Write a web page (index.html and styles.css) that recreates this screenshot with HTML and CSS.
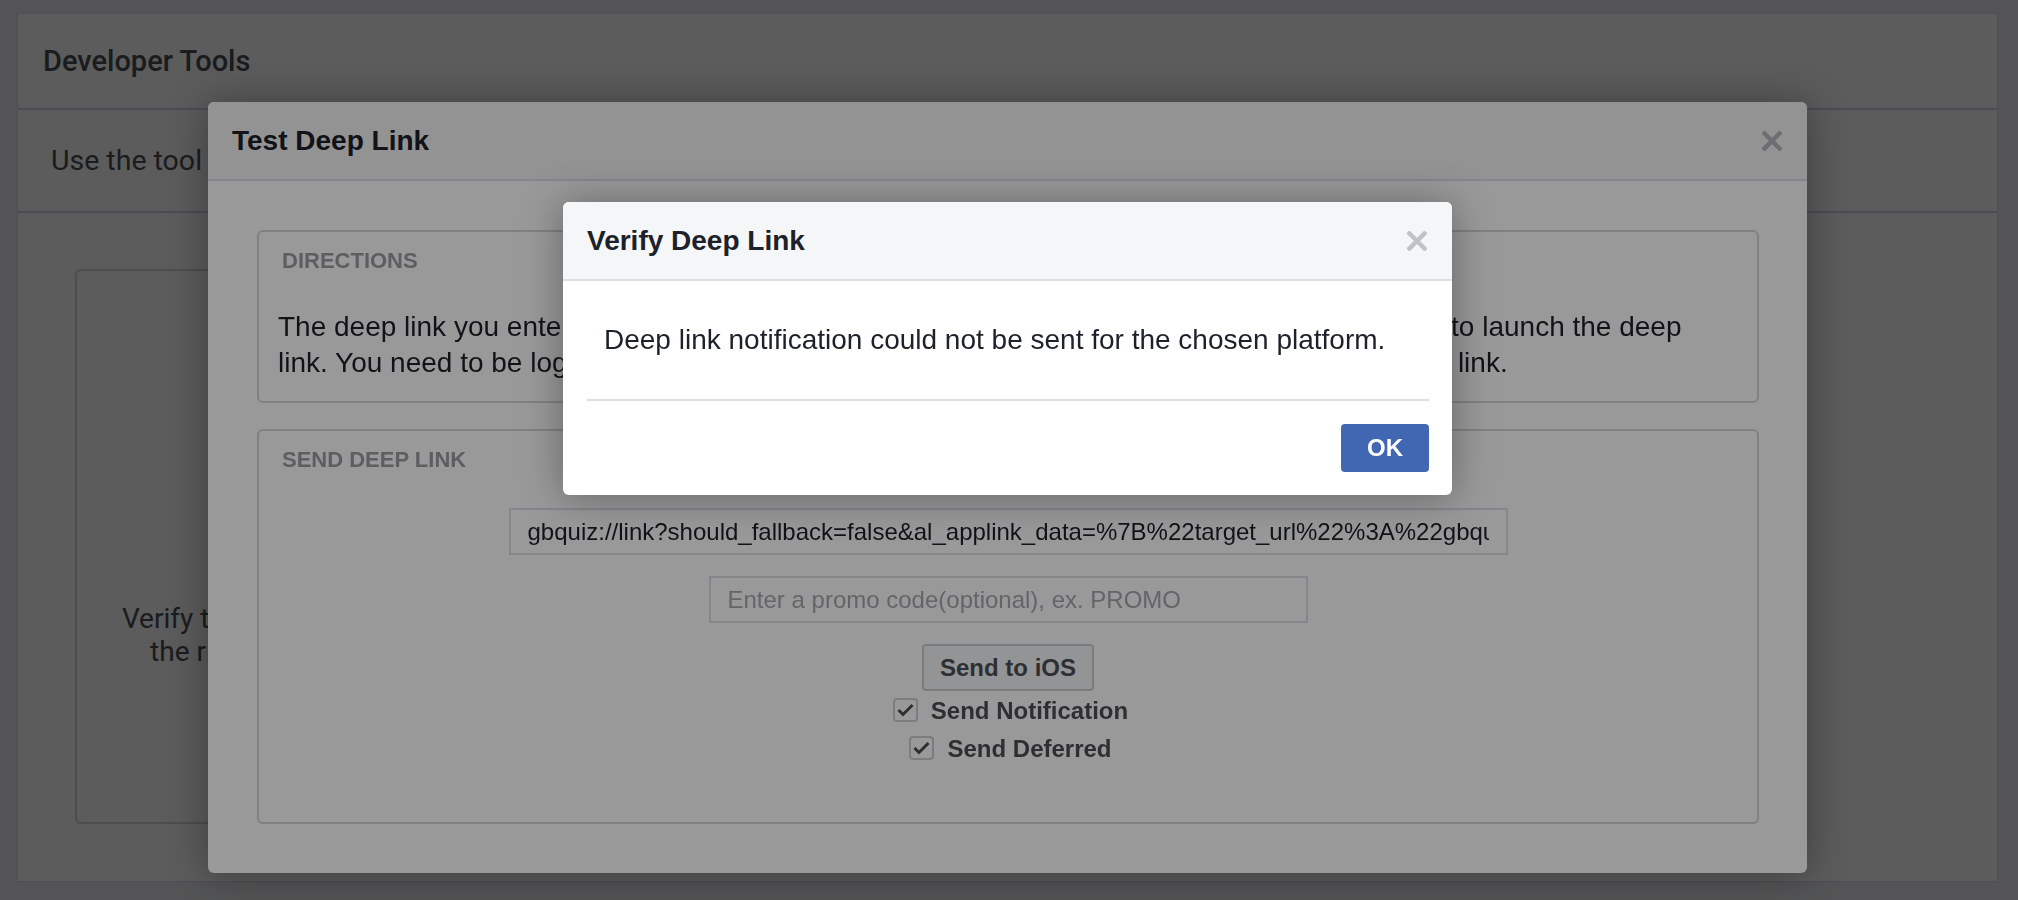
FILE: index.html
```html
<!DOCTYPE html>
<html lang="en">
<head>
<meta charset="utf-8">
<title>Developer Tools</title>
<link rel="stylesheet" href="styles.css">
</head>
<body>
<div class="page">
  <div class="panel">
    <div class="panel-head">Developer Tools</div>
    <div class="panel-intro">Use the tool below to test how your app handles deep links and notifications.</div>
    <div class="panel-body">
      <div class="tool-card">
        <p class="tool-text">Verify that a deep link opens<br>the right content in app.</p>
      </div>
    </div>
  </div>
</div>

<div class="overlay"></div>

<div class="modal test-modal">
  <div class="modal-head">
    <span class="modal-title">Test Deep Link</span>
    <svg class="close close-dim" width="20" height="20" viewBox="0 0 20 20"><path d="M2.5 2.5 L17.5 17.5 M17.5 2.5 L2.5 17.5" /></svg>
  </div>
  <div class="test-body">
    <div class="box directions">
      <div class="box-title">DIRECTIONS</div>
      <p class="dir-text">The deep link you entered will be sent to your mobile device. Tap the notification on the device to launch the deep<br>link. You need to be logged into Facebook on your device with the same account to receive the link.</p>
    </div>
    <div class="box send">
      <div class="box-title">SEND DEEP LINK</div>
      <div class="send-form">
        <input class="field url-field" type="text" value="gbquiz://link?should_fallback=false&amp;al_applink_data=%7B%22target_url%22%3A%22gbquiz%3A%2F%2Flink%22%7D">
        <input class="field promo-field" type="text" placeholder="Enter a promo code(optional), ex. PROMO">
        <button class="btn-send" type="button">Send to iOS</button>
        <label class="check">
          <span class="check-box"><svg width="25" height="24" viewBox="0 0 25 24"><path d="M5.5 12 L10 16.5 L19.5 7" /></svg></span>
          <span class="check-label">Send Notification</span>
        </label>
        <label class="check">
          <span class="check-box"><svg width="25" height="24" viewBox="0 0 25 24"><path d="M5.5 12 L10 16.5 L19.5 7" /></svg></span>
          <span class="check-label">Send Deferred</span>
        </label>
      </div>
    </div>
  </div>
</div>

<div class="overlay"></div>

<div class="modal verify-modal">
  <div class="modal-head verify-head">
    <span class="modal-title">Verify Deep Link</span>
    <svg class="close close-light" width="20" height="20" viewBox="0 0 20 20"><path d="M2.5 2.5 L17.5 17.5 M17.5 2.5 L2.5 17.5" /></svg>
  </div>
  <div class="verify-msg">Deep link notification could not be sent for the chosen platform.</div>
  <div class="verify-foot">
    <button class="btn-ok" type="button">OK</button>
  </div>
</div>
</body>
</html>
```
FILE: styles.css
```css
* { box-sizing: border-box; }

html, body {
  margin: 0;
  padding: 0;
  width: 2018px;
  height: 900px;
  overflow: hidden;
}

body {
  background: #e9ebee;
  font-family: "Liberation Sans", Arial, sans-serif;
  color: #1d2129;
}

/* ---------- background page ---------- */
.page {
  padding: 13px 20px 18px 17px;
  height: 900px;
}

.panel {
  height: 869px;
  background: #ffffff;
  border: 1px solid #dddfe2;
  display: flex;
  flex-direction: column;
  font-family: Roboto, "Liberation Sans", sans-serif;
}

.panel-head {
  height: 96px;
  border-bottom: 2px solid #d3d6db;
  display: flex;
  align-items: center;
  padding-left: 25px;
  font-size: 29px;
  font-weight: 500;
  color: #4b4f56;
}

.panel-intro {
  height: 103px;
  border-bottom: 2px solid #d3d6db;
  display: flex;
  align-items: center;
  padding-left: 33px;
  font-size: 28.5px;
  color: #4b4f56;
  white-space: nowrap;
  overflow: hidden;
}

.panel-body {
  flex: 1;
  padding: 56px 57px 57px 57px;
  display: flex;
}

.tool-card {
  width: 445px;
  border: 2px solid #d3d6db;
  border-radius: 6px;
  padding-top: 331px;
}

.tool-text {
  margin: 0;
  text-align: center;
  font-size: 28px;
  line-height: 33px;
  color: #4b4f56;
  white-space: nowrap;
}

/* ---------- overlays ---------- */
.overlay {
  position: fixed;
  inset: 0;
  background: rgba(0, 0, 0, 0.4);
}

/* ---------- modals ---------- */
.modal {
  position: absolute;
  background: #ffffff;
  border-radius: 6px;
  overflow: hidden;
  box-shadow: 0 2px 40px rgba(0, 0, 0, 0.35);
}

.test-modal {
  left: 208px;
  top: 102px;
  width: 1599px;
  height: 771px;
}

.verify-modal {
  left: 563px;
  top: 202px;
  width: 889px;
}

.modal-head {
  height: 79px;
  background: #f5f6f7;
  border-bottom: 2px solid #dddfe2;
  display: flex;
  align-items: center;
  justify-content: space-between;
  padding: 0 25px 0 24px;
}

.modal-title {
  font-size: 28px;
  font-weight: bold;
  color: #1d2129;
}

.close path {
  fill: none;
  stroke-width: 4.5;
  stroke-linecap: square;
}

.close-dim path { stroke: #b4b8be; }
.close-light path { stroke: #bec2c9; }

/* ---------- test modal body ---------- */
.test-body {
  padding: 49px 48px 49px 49px;
  display: flex;
  flex-direction: column;
  gap: 26px;
}

.box {
  border: 2px solid #d3d6db;
  border-radius: 6px;
  padding: 16px 19px 19px 19px;
}

.box-title {
  font-size: 22px;
  line-height: 26px;
  font-weight: bold;
  color: #9a9da4;
  padding-left: 4px;
}

.directions { height: 173px; }

.dir-text {
  margin: 35px 0 0 0;
  font-size: 28px;
  line-height: 36px;
  color: #1d2129;
  white-space: nowrap;
}

.send {
  height: 395px;
}

.send-form {
  margin-top: 35px;
  display: flex;
  flex-direction: column;
  align-items: center;
}

.field {
  height: 47px;
  border: 2px solid #dddfe2;
  border-radius: 0;
  background: #ffffff;
  padding: 0 17px;
  font-family: "Liberation Sans", Arial, sans-serif;
  font-size: 24px;
  color: #1d2129;
  outline: none;
}

.field::placeholder { color: #a5a8ae; }

.url-field { width: 999px; }

.promo-field {
  width: 599px;
  margin-top: 21px;
}

.btn-send {
  margin-top: 21px;
  height: 47px;
  padding: 0 16px;
  border: 2px solid #ccd0d5;
  border-radius: 4px;
  background: #f6f7f9;
  font-family: "Liberation Sans", Arial, sans-serif;
  font-size: 24px;
  font-weight: bold;
  color: #4b4f56;
}

.check {
  height: 38px;
  display: flex;
  align-items: center;
  gap: 13px;
  padding-left: 5px;
}

.check-box {
  width: 25px;
  height: 24px;
  border: 2px solid #ccd0d5;
  border-radius: 4px;
  background: #ffffff;
  display: flex;
  align-items: center;
  justify-content: center;
}

.check-box svg {
  display: block;
  flex: none;
}

.check-box path {
  fill: none;
  stroke: #4b4f56;
  stroke-width: 3;
}

.check-label {
  font-size: 24px;
  font-weight: bold;
  color: #4b4f56;
  position: relative;
  top: 1px;
}

/* ---------- verify modal ---------- */
.verify-msg {
  margin: 0 23px 0 24px;
  padding: 41px 17px;
  font-size: 28px;
  line-height: 36px;
  color: #1d2129;
  border-bottom: 2px solid #dddfe2;
}

.verify-foot {
  display: flex;
  justify-content: flex-end;
  padding: 23px;
}

.btn-ok {
  height: 48px;
  padding: 0 26px;
  border: none;
  border-radius: 4px;
  background: #4267b2;
  color: #ffffff;
  font-family: "Liberation Sans", Arial, sans-serif;
  font-size: 24px;
  font-weight: bold;
}
```
